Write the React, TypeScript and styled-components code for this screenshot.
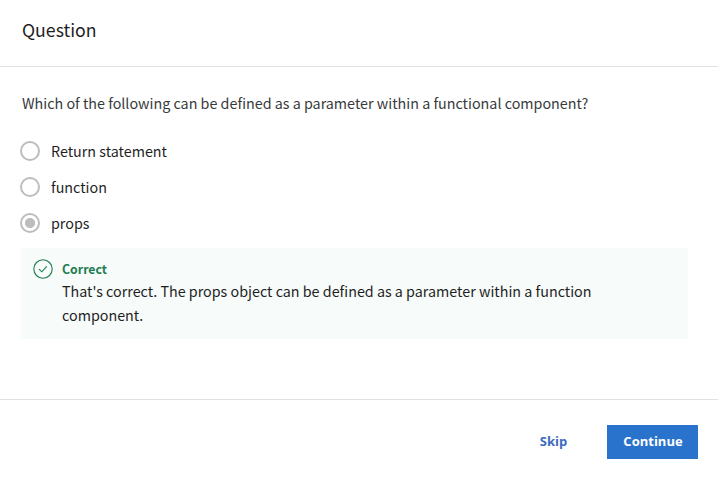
import React from "react";
import styled, { createGlobalStyle } from "styled-components";

const GlobalStyle = createGlobalStyle`
  * { box-sizing: border-box; }
  body { margin: 0; background: #fff; color: #1f1f1f; font-family: "Noto Sans CJK SC", "Noto Sans", sans-serif; }
  p, h1 { margin: 0; }
`;

const Dialog = styled.main`
  display: flex;
  flex-direction: column;
  width: 718px;
  height: 480px;
  overflow: hidden;
`;
const Header = styled.header`
  height: 67px;
  padding: 15px 22px 0;
  border-bottom: 1px solid #e1e1e1;
`;
const Title = styled.h1`
  width: max-content;
  font-size: 17.7px;
  line-height: 28px;
  font-weight: 400;
`;
const Body = styled.section`
  height: 332px;
  padding: 24px 30px 0 22px;
`;
const Line = styled.p<{ $muted?: boolean }>`
  font-size: 14.32px;
  line-height: 24px;
  white-space: nowrap;
  color: ${(p) => (p.$muted ? "#373a3c" : "#1f1f1f")};
`;
const Options = styled.div`
  display: flex;
  flex-direction: column;
  padding-top: 18px;
`;
const Option = styled.label`
  display: flex;
  align-items: center;
  gap: 11px;
  height: 36px;
  margin-left: -2px;
`;
const Radio = styled.span<{ $checked?: boolean }>`
  width: 20px;
  height: 20px;
  border-radius: 50%;
  border: 2px solid #bdbdbd;
  background: ${(p) => (p.$checked ? "radial-gradient(circle, #bdbdbd 4.7px, #fff 5.4px)" : "#fff")};
`;
const Feedback = styled.aside`
  display: flex;
  gap: 9px;
  width: 667px;
  height: 91px;
  margin: 7px 0 0 -1px;
  padding: 11px 12px;
  background: #f7fbfa;
`;
const Verdict = styled.p`
  font-size: 12.3px;
  line-height: 20px;
  font-weight: 700;
  color: #1d7c50;
`;
const Footer = styled.footer`
  display: flex;
  justify-content: flex-end;
  flex: 1;
  padding: 25px 20px 0 0;
  border-top: 1px solid #e1e1e1;
`;
const Button = styled.button<{ $primary?: boolean }>`
  display: flex;
  justify-content: center;
  width: ${(p) => (p.$primary ? 91 : 107)}px;
  height: 34px;
  padding: ${(p) => (p.$primary ? "0 0 0 1px" : "0")};
  border: 0;
  font: 700 13px/32px "Open Sans", sans-serif;
  color: ${(p) => (p.$primary ? "#fff" : "#3a6cc0")};
  background: ${(p) => (p.$primary ? "#2a73cc" : "transparent")};
`;

export default function App() {
  return (
    <Dialog>
      <GlobalStyle />
      <Header><Title>Question</Title></Header>
      <Body>
        <Line $muted>Which of the following can be defined as a parameter within a functional component?</Line>
        <Options>
          <Option><Radio /><Line>Return statement</Line></Option>
          <Option><Radio /><Line>function</Line></Option>
          <Option><Radio $checked /><Line>props</Line></Option>
        </Options>
        <Feedback>
          <svg width="20" height="20" viewBox="0 0 20 20" fill="none" stroke="#1d7c50" strokeWidth="1.1">
            <circle cx="10" cy="10" r="9.2" />
            <path d="M6 10.2l2.8 2.6 5-5.4" />
          </svg>
          <div>
            <Verdict>Correct</Verdict>
            <Line>That's correct. The props object can be defined as a parameter within a function</Line>
            <Line>component.</Line>
          </div>
        </Feedback>
      </Body>
      <Footer>
        <Button>Skip</Button>
        <Button $primary>Continue</Button>
      </Footer>
    </Dialog>
  );
}
